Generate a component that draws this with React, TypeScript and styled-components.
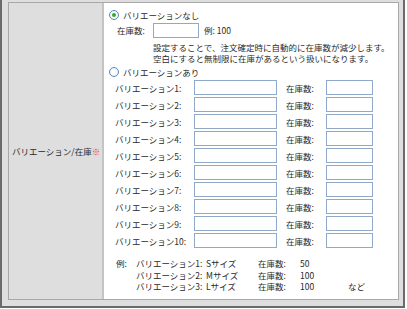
import React from "react";
import styled, { createGlobalStyle } from "styled-components";

const Global = createGlobalStyle`
  html, body { margin: 0; padding: 0; background: #ffffff; }
  body {
    font-family: "Noto Sans CJK JP", "Noto Sans", sans-serif;
    font-size: 8.5px;
    color: #2a2a2a;
  }
`;

const Frame = styled.div`
  box-sizing: border-box;
  width: 405px;
  height: 308px;
  border-left: 2px solid #6a6a6a;
  border-right: 2px solid #6a6a6a;
  border-bottom: 2px solid #6a6a6a;
  background: #dedede;
  padding: 2px 4px 6px 6px;
`;

const Table = styled.div`
  box-sizing: border-box;
  height: 100%;
  display: grid;
  grid-template-columns: 95px 1fr;
  border: 1px solid #a8a8a8;
`;

const LabelCell = styled.div`
  background: #dedede;
  border-right: 2px solid #c4c4c4;
  display: flex;
  align-items: center;
  padding-left: 3px;
  white-space: nowrap;
`;

const Required = styled.span`
  color: #f03c3c;
`;

const ContentCell = styled.div`
  background: #ffffff;
  padding: 5px 0 0 5px;
  display: flex;
  flex-direction: column;
  white-space: nowrap;
`;

const RadioRow = styled.div`
  display: flex;
  align-items: center;
  height: 14px;
  gap: 4px;
`;

const Radio = styled.span<{ $checked?: boolean }>`
  box-sizing: border-box;
  width: 10px;
  height: 10px;
  border-radius: 50%;
  border: 1px solid #5a8ac2;
  background: radial-gradient(circle, #ffffff 30%, #e4e8ee 100%);
  display: inline-flex;
  align-items: center;
  justify-content: center;
  &::after {
    content: "";
    width: 4px;
    height: 4px;
    border-radius: 50%;
    background: ${(p) => (p.$checked ? "#2fae2f" : "transparent")};
  }
`;

const StockRow = styled.div`
  display: flex;
  align-items: center;
  padding-left: 8px;
  height: 16px;
`;

const StockLabel = styled.span`
  width: 36px;
`;

const Input = styled.span<{ $w: number }>`
  box-sizing: border-box;
  display: inline-block;
  width: ${(p) => p.$w}px;
  height: 15px;
  border: 1px solid #8fa9c8;
  background: #fff;
`;

const Hint = styled.span`
  margin-left: 5px;
`;

const Desc = styled.div`
  padding-left: 44px;
  margin-top: 3.5px;
  line-height: 11px;
  margin-bottom: 1.5px;
`;

const VarGrid = styled.div`
  display: grid;
  grid-template-columns: 79px 83px 9px 40px 47px;
  grid-auto-rows: 17px;
  align-items: center;
  padding-left: 6px;
`;

const StockCell = styled.span`
  grid-column: 4;
`;

const Example = styled.div`
  display: grid;
  grid-template-columns: 20px 70px 52px 42px 48px auto;
  grid-auto-rows: 11.5px;
  align-items: center;
  padding-left: 7px;
  margin-top: 8.5px;
`;

const variations = Array.from({ length: 10 }, (_, i) => i + 1);

const examples = [
  { n: 1, size: "Sサイズ", stock: "50", extra: "" },
  { n: 2, size: "Mサイズ", stock: "100", extra: "" },
  { n: 3, size: "Lサイズ", stock: "100", extra: "など" },
];

export default function App() {
  return (
    <>
      <Global />
      <Frame>
        <Table>
          <LabelCell>
            バリエーション/在庫<Required>※</Required>
          </LabelCell>
          <ContentCell>
            <RadioRow>
              <Radio $checked />
              <span>バリエーションなし</span>
            </RadioRow>
            <StockRow>
              <StockLabel>在庫数:</StockLabel>
              <Input $w={46} />
              <Hint>例: 100</Hint>
            </StockRow>
            <Desc>
              設定することで、注文確定時に自動的に在庫数が減少します。
              <br />
              空白にすると無制限に在庫があるという扱いになります。
            </Desc>
            <RadioRow>
              <Radio />
              <span>バリエーションあり</span>
            </RadioRow>
            <VarGrid>
              {variations.map((n) => (
                <React.Fragment key={n}>
                  <span>バリエーション{n}:</span>
                  <Input $w={83} />
                  <StockCell>在庫数:</StockCell>
                  <Input $w={47} />
                </React.Fragment>
              ))}
            </VarGrid>
            <Example>
              {examples.map((e) => (
                <React.Fragment key={e.n}>
                  <span>{e.n === 1 ? "例:" : ""}</span>
                  <span>バリエーション{e.n}:</span>
                  <span>{e.size}</span>
                  <span>在庫数:</span>
                  <span>{e.stock}</span>
                  <span>{e.extra}</span>
                </React.Fragment>
              ))}
            </Example>
          </ContentCell>
        </Table>
      </Frame>
    </>
  );
}
